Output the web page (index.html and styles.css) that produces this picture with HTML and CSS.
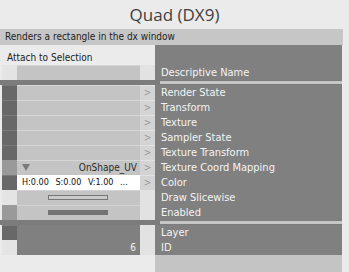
FILE: index.html
```html
<!DOCTYPE html>
<html lang="en">
<head>
    <meta charset="UTF-8">
    <title>Quad (DX9)</title>
    <link rel="stylesheet" href="styles.css">
</head>
<body>
    <h1 class="title">Quad (DX9)</h1>
    <div class="desc">Renders a rectangle in the dx window</div>

    <div class="inspector">
        <!-- top: attach + panel head -->
        <div class="row head">
            <div class="left attach">Attach to Selection</div>
            <div class="label"></div>
        </div>

        <div class="row">
            <div class="mark blank"></div>
            <div class="value"></div>
            <div class="more blank"></div>
            <div class="label">Descriptive Name</div>
        </div>

        <div class="gap"><div class="gap-line"></div></div>

        <div class="row">
            <div class="mark"></div><div class="value"></div><div class="more">&gt;</div>
            <div class="label">Render State</div>
        </div>
        <div class="row">
            <div class="mark"></div><div class="value"></div><div class="more">&gt;</div>
            <div class="label">Transform</div>
        </div>
        <div class="row">
            <div class="mark"></div><div class="value"></div><div class="more">&gt;</div>
            <div class="label">Texture</div>
        </div>
        <div class="row">
            <div class="mark"></div><div class="value"></div><div class="more">&gt;</div>
            <div class="label">Sampler State</div>
        </div>
        <div class="row">
            <div class="mark"></div><div class="value"></div><div class="more">&gt;</div>
            <div class="label">Texture Transform</div>
        </div>
        <div class="row">
            <div class="mark mid"></div>
            <div class="value enum"><span class="arrow"></span><span>OnShape_UV</span></div>
            <div class="more">&gt;</div>
            <div class="label">Texture Coord Mapping</div>
        </div>
        <div class="row">
            <div class="mark"></div>
            <div class="value color">H:0.00 S:0.00 V:1.00 ...</div>
            <div class="more">&gt;</div>
            <div class="label">Color</div>
        </div>
        <div class="row">
            <div class="mark blank"></div>
            <div class="value toggle"><span class="switch"></span></div>
            <div class="more blank"></div>
            <div class="label">Draw Slicewise</div>
        </div>
        <div class="row">
            <div class="mark mid"></div>
            <div class="value toggle"><span class="switch on"></span></div>
            <div class="more blank"></div>
            <div class="label">Enabled</div>
        </div>

        <div class="gap"><div class="gap-line"></div></div>

        <div class="row">
            <div class="mark"></div>
            <div class="value dark"></div>
            <div class="more blank"></div>
            <div class="label">Layer</div>
        </div>
        <div class="row">
            <div class="mark blank"></div>
            <div class="value dark num">6</div>
            <div class="more blank"></div>
            <div class="label">ID</div>
        </div>

        <div class="row foot">
            <div class="left"></div>
            <div class="label"></div>
        </div>
    </div>
</body>
</html>
```

FILE: styles.css
```css
/* base */
* {
    box-sizing: border-box;
}

body {
    margin: 0;
    background-color: #ebebeb;
    font-family: Tahoma, "DejaVu Sans Condensed", "DejaVu Sans", sans-serif;
    font-size: 10px;
    color: #222;
}

.title {
    margin: 0;
    height: 29px;
    padding-top: 4px;
    text-align: center;
    font-family: "Open Sans", sans-serif;
    font-weight: normal;
    font-size: 17px;
    line-height: 22px;
    color: #404040;
}

.desc {
    width: 343px;
    height: 16px;
    line-height: 16px;
    padding-left: 5px;
    background-color: #c6c6c6;
    color: #1e1e1e;
    white-space: nowrap;
}

/* inspector rows */
.inspector {
    width: 342px;
}

.row {
    display: flex;
    height: 15px;
}

.row.head {
    height: 20px;
}

.row.foot {
    height: 17px;
}

.left {
    width: 155px;
    flex-shrink: 0;
}

.attach {
    padding: 7px 0 0 7px;
    line-height: 12px;
}

.mark {
    width: 15px;
    margin-left: 2px;
    flex-shrink: 0;
    background-color: #686868;
    box-shadow: inset 0 1px 0 #7a7a7a;
}

.mark.mid {
    background-color: #9a9a9a;
    box-shadow: none;
}

.mark.blank {
    background-color: #e4e4e4;
    box-shadow: none;
}

.value {
    width: 123px;
    flex-shrink: 0;
    background-color: #c4c4c4;
    box-shadow: inset 0 1px 0 #d6d6d6;
    display: flex;
    align-items: center;
    justify-content: space-between;
    line-height: 15px;
    white-space: nowrap;
    overflow: hidden;
}

.value.enum {
    padding: 0 3px 0 5px;
    color: #2a2a2a;
}

.arrow {
    width: 0;
    height: 0;
    border-left: 4px solid transparent;
    border-right: 4px solid transparent;
    border-top: 7px solid #7a7a7a;
}

.value.color {
    background-color: #ffffff;
    box-shadow: none;
    padding-left: 5px;
    font-size: 9px;
    word-spacing: 4px;
    color: #111;
}

.value.toggle {
    justify-content: flex-start;
    padding-left: 31px;
    box-shadow: inset 0 1px 0 #d2d2d2;
}

.switch {
    width: 60px;
    height: 5px;
    border: 1px solid #777;
    background-color: #cacaca;
}

.switch.on {
    background-color: #737373;
    border-color: #737373;
}

.value.dark {
    background-color: #808080;
    box-shadow: none;
}

.value.num {
    justify-content: flex-end;
    padding-right: 4px;
    color: #f2f2f2;
}

.more {
    width: 15px;
    flex-shrink: 0;
    background-color: #d4d4d4;
    box-shadow: inset 0 1px 0 #e2e2e2;
    color: #9a9a9a;
    text-align: center;
    line-height: 16px;
}

.more.blank {
    background-color: #e2e2e2;
    box-shadow: none;
}

.label {
    flex: 1;
    background-color: #808080;
    color: #f4f4f4;
    padding-left: 6px;
    line-height: 15px;
    font-size: 11px;
    white-space: nowrap;
}

.foot .label {
    background-color: #c4c4c4;
}

.gap {
    height: 5px;
    background-color: #7c7c7c;
    padding: 1px 0 0 160px;
}

.gap-line {
    height: 3px;
    background-color: #c6c6c6;
}
```
